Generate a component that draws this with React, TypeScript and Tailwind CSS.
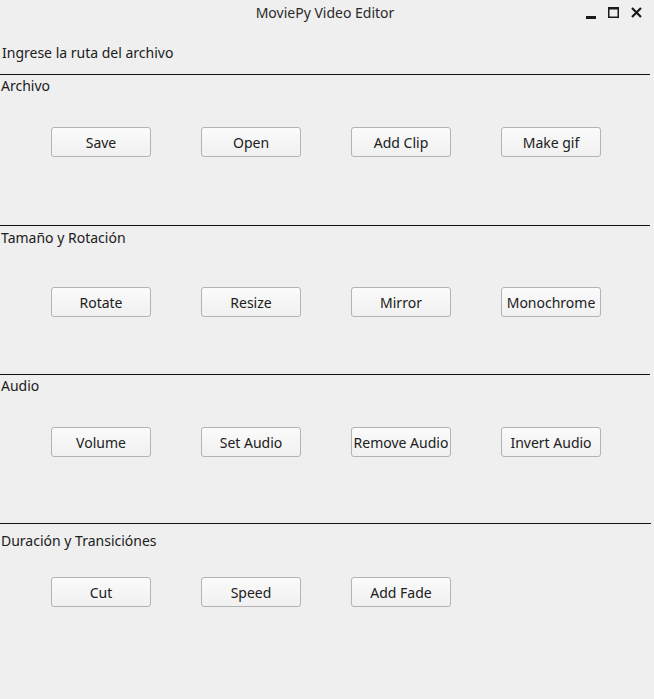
import React from "react";

const Btn = ({ label }: { label: string }) => (
  <button className="w-[100px] h-[30px] shrink-0 rounded-[3px] border border-[#b3b3b3] bg-gradient-to-b from-[#fbfbfb] to-[#f0f0f0] text-[14px] leading-[18px] text-[#202020] whitespace-nowrap px-0 pt-[2px] flex items-center justify-center">
    {label}
  </button>
);

const Row = ({ labels, mt }: { labels: string[]; mt: string }) => (
  <div className={`flex pl-[51px] gap-[50px] ${mt}`}>
    {labels.map((l) => (
      <Btn key={l} label={l} />
    ))}
  </div>
);

export default function App() {
  return (
    <div
      className="w-[654px] h-[699px] bg-[#efefef] text-[#202020] overflow-hidden"
      style={{ fontFamily: '"Noto Sans", "Open Sans", sans-serif' }}
    >
      {/* title bar */}
      <div className="h-[25px] flex items-center">
        <div className="flex-1" />
        <div className="text-[14px] leading-[18px] text-[#2a2a2a] pt-[1px] ml-[8px]">MoviePy Video Editor</div>
        <div className="flex-1 flex justify-end items-center pr-[12px] gap-[12px]">
          <svg width="10" height="12" viewBox="0 0 10 12">
            <rect x="0" y="9" width="10" height="3" fill="#1a1a1a" />
          </svg>
          <svg width="11" height="11" viewBox="0 0 11 11">
            <rect x="0.75" y="0.75" width="9.5" height="9.5" fill="none" stroke="#1a1a1a" strokeWidth="1.5" />
            <rect x="0" y="0" width="11" height="2.5" fill="#1a1a1a" />
          </svg>
          <svg width="11" height="11" viewBox="0 0 11 11">
            <path d="M1 1 L10 10 M10 1 L1 10" stroke="#1a1a1a" strokeWidth="2.2" />
          </svg>
        </div>
      </div>

      <div className="mt-[19px] pl-[2px] text-[14px] leading-[18px]">Ingrese la ruta del archivo</div>
      <div className="mt-[12px] h-px w-[650px] bg-[#111]" />
      <div className="mt-[2px] pl-[1px] text-[14px] leading-[18px]">Archivo</div>
      <Row labels={["Save", "Open", "Add Clip", "Make gif"]} mt="mt-[32px]" />

      <div className="mt-[68px] h-px w-[650px] bg-[#111]" />
      <div className="mt-[3px] pl-[1px] text-[14px] leading-[18px]">Tamaño y Rotación</div>
      <Row labels={["Rotate", "Resize", "Mirror", "Monochrome"]} mt="mt-[40px]" />

      <div className="mt-[57px] h-px w-[650px] bg-[#111]" />
      <div className="mt-[2px] pl-[1px] text-[14px] leading-[18px]">Audio</div>
      <Row labels={["Volume", "Set Audio", "Remove Audio", "Invert Audio"]} mt="mt-[32px]" />

      <div className="mt-[66px] h-px w-[651px] bg-[#111]" />
      <div className="mt-[8px] pl-[1px] text-[14px] leading-[18px]">Duración y Transiciónes</div>
      <Row labels={["Cut", "Speed", "Add Fade"]} mt="mt-[27px]" />
    </div>
  );
}
